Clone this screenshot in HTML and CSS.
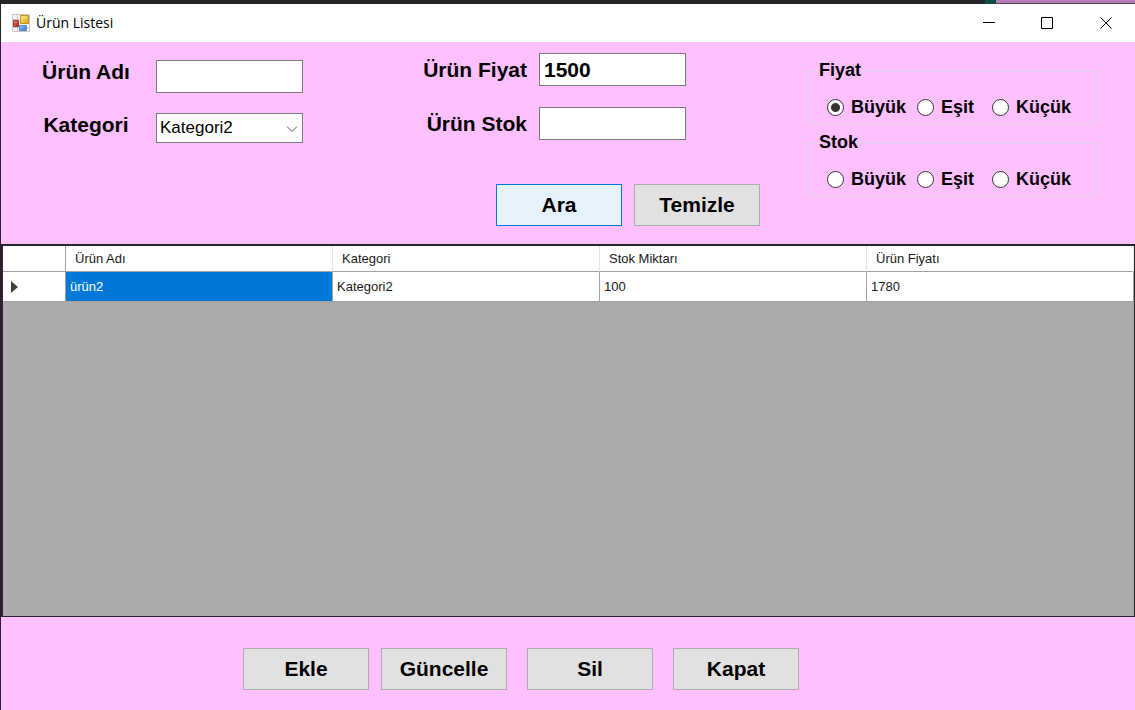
FILE: index.html
```html
<!DOCTYPE html>
<html lang="tr">
<head>
<meta charset="utf-8">
<meta name="viewport" content="width=device-width, initial-scale=1">
<title>Ürün Listesi</title>
<link rel="stylesheet" href="styles.css">
</head>
<body>
<div class="backdrop"><span class="backdrop-teal"></span><span class="backdrop-mauve"></span></div>
<div class="window">
  <header class="titlebar">
    <svg class="app-icon" width="18" height="18" viewBox="0 0 18 18" aria-hidden="true">
      <defs>
        <linearGradient id="gold" x1="0" y1="0" x2="1" y2="1"><stop offset="0" stop-color="#fff09a"/><stop offset="1" stop-color="#dda008"/></linearGradient>
        <linearGradient id="red" x1="0" y1="0" x2="1" y2="1"><stop offset="0" stop-color="#f08a70"/><stop offset="1" stop-color="#a81c10"/></linearGradient>
        <linearGradient id="blue" x1="0" y1="0" x2="1" y2="1"><stop offset="0" stop-color="#9cc8fa"/><stop offset="1" stop-color="#3070d0"/></linearGradient>
      </defs>
      <path fill="#f6f6f8" stroke="#c8c8cc" d="M.5.5h17v17H.5zM.5 5.5h7M5.5.5v17M.5 13.5h17"/>
      <path fill="url(#gold)" stroke="#c09020" d="M8.500 1.500h8v8h-8z"/>
      <path fill="url(#red)" stroke="#a83828" d="M1.500 6.500h5v6h-5z"/>
      <path fill="url(#blue)" stroke="#5888c8" d="M7.500 11.500h7v5h-7z"/>
    </svg>
    <h1 class="title">Ürün Listesi</h1>
    <button class="caption" type="button" aria-label="Simge durumuna küçült"><svg width="14" height="14" viewBox="0 0 14 14"><path d="M2 6.500h12"/></svg></button>
    <button class="caption" type="button" aria-label="Ekranı kapla"><svg width="14" height="14" viewBox="0 0 14 14"><path d="M1.500 1.500h11v11h-11z"/></svg></button>
    <button class="caption" type="button" aria-label="Pencereyi kapat"><svg width="14" height="14" viewBox="0 0 14 14"><path d="M1.500 1.500l11 11M12.500 1.500l-11 11"/></svg></button>
  </header>

  <form class="search">
    <div class="fields fields-main">
      <div class="field"><label for="name">Ürün Adı</label><input class="box" id="name" type="text"></div>
      <div class="field"><label for="category">Kategori</label>
        <span class="combo"><select id="category"><option>Kategori1</option><option selected>Kategori2</option></select>
        <svg class="chevron" width="12" height="8" viewBox="0 0 12 8" aria-hidden="true"><path d="M1 1.500l5 5 5-5"/></svg></span>
      </div>
    </div>
    <div class="middle">
      <div class="fields fields-value">
        <div class="field"><label for="price">Ürün Fiyat</label><input class="box" id="price" type="text" value="1500"></div>
        <div class="field"><label for="stock">Ürün Stok</label><input class="box" id="stock" type="text"></div>
      </div>
      <div class="search-actions">
        <button class="btn btn-default" type="button">Ara</button>
        <button class="btn" type="button">Temizle</button>
      </div>
    </div>
    <div class="compare">
      <fieldset>
        <legend>Fiyat</legend>
        <div class="radios">
          <label><input type="radio" name="price-op" checked>Büyük</label>
          <label><input type="radio" name="price-op">Eşit</label>
          <label><input type="radio" name="price-op">Küçük</label>
        </div>
      </fieldset>
      <fieldset>
        <legend>Stok</legend>
        <div class="radios">
          <label><input type="radio" name="stock-op">Büyük</label>
          <label><input type="radio" name="stock-op">Eşit</label>
          <label><input type="radio" name="stock-op">Küçük</label>
        </div>
      </fieldset>
    </div>
  </form>

  <main class="grid">
    <table>
      <colgroup><col class="col-marker"><col><col><col><col></colgroup>
      <thead>
        <tr><th></th><th scope="col">Ürün Adı</th><th scope="col">Kategori</th><th scope="col">Stok Miktarı</th><th scope="col">Ürün Fiyatı</th></tr>
      </thead>
      <tbody>
        <tr>
          <td class="marker"><svg width="8" height="12" viewBox="0 0 8 12" aria-hidden="true"><path d="M0 0l7 6-7 6z"/></svg></td>
          <td class="selected">ürün2</td><td>Kategori2</td><td>100</td><td>1780</td>
        </tr>
      </tbody>
    </table>
  </main>

  <footer class="actions">
    <div class="action-pair">
      <button class="btn" type="button">Ekle</button>
      <button class="btn" type="button">Güncelle</button>
    </div>
    <button class="btn" type="button">Sil</button>
    <button class="btn" type="button">Kapat</button>
  </footer>
</div>
</body>
</html>
```
FILE: styles.css
```css
* { box-sizing: border-box; }

body {
  margin: 0;
  min-height: 100vh;
  display: flex;
  flex-direction: column;
  background: #2a202b;
  color: #000;
  font-family: "Liberation Sans", Arial, sans-serif;
}

button, input, select { font: inherit; color: inherit; }

.backdrop {
  display: flex;
  justify-content: flex-end;
  height: 4px;
  background: #262626;
}
.backdrop-teal { width: 11px; background: #0b4f43; }
.backdrop-mauve { width: 139px; background: #b57bb4; border-bottom: 1px solid #57405a; }

.window {
  flex: 1;
  display: flex;
  flex-direction: column;
  margin-left: 1px;
  background: #ffc0ff;
}

.titlebar {
  display: flex;
  align-items: center;
  height: 38px;
  padding-left: 11px;
  background: #fff;
}
.title {
  flex: 1;
  margin: 0 0 0 6px;
  font: 400 14px/20px "Open Sans", "Noto Sans", sans-serif;
}
.caption {
  display: grid;
  place-items: center;
  width: 59px;
  height: 38px;
  padding: 0;
  border: 0;
  background: none;
}
.caption svg { fill: none; stroke: #000; }

.search {
  display: flex;
  align-items: flex-start;
  padding: 11px 38px 18px 41px;
  font-size: 21px;
  font-weight: 700;
  line-height: 24px;
}
.fields { display: grid; }
.field { display: flex; }
.fields-main { gap: 20px; padding-top: 7px; }
.fields-main .field { gap: 26px; align-items: flex-start; }
.fields-main label { width: 88px; text-align: center; white-space: nowrap; }
.fields-value { gap: 21px; }
.fields-value .field { gap: 12px; align-items: center; }
.fields-value label { width: 104px; text-align: right; white-space: nowrap; }

.box {
  width: 147px;
  height: 33px;
  padding: 0 4px;
  border: 1px solid #7a7a7a;
  background: #fff;
}
.combo { position: relative; display: flex; }
.combo select {
  appearance: none;
  width: 147px;
  height: 30px;
  padding: 0 20px 0 3px;
  border: 1px solid #7a7a7a;
  border-radius: 0;
  background: #fff;
  font-size: 17px;
  font-weight: 400;
}
.chevron {
  position: absolute;
  right: 5px;
  top: 12px;
  fill: none;
  stroke: #555;
  pointer-events: none;
}

.middle { margin-left: 120px; }
.search-actions {
  display: flex;
  justify-content: flex-end;
  gap: 12px;
  width: 337px;
  padding-top: 44px;
}
.btn {
  width: 126px;
  height: 42px;
  padding: 0;
  border: 1px solid #adadad;
  background: #e1e1e1;
  font-size: 21px;
  font-weight: 700;
}
.btn-default { border-color: #0078d7; background: #e5f1fb; }

.compare {
  display: grid;
  gap: 8px;
  width: 290px;
  margin-left: auto;
  padding-top: 7px;
  font-size: 18px;
  line-height: 20px;
}
fieldset {
  min-width: 0;
  margin: 0;
  padding: 16px 0 5px 19px;
  border: 1px solid #dcd8de;
}
legend { margin-left: -8px; padding: 0; }
.radios {
  display: grid;
  grid-template-columns: 90px 75px auto;
  height: 22px;
}
.radios label { display: flex; align-items: center; gap: 7px; }
.radios input {
  appearance: none;
  width: 17px;
  height: 17px;
  margin: 0;
  border: 1px solid #333;
  border-radius: 50%;
  background: #fff;
}
.radios input:checked { background: radial-gradient(circle, #333 4px, #fff 5px); }

.grid {
  flex: 1;
  border: solid #2b242c;
  border-width: 2px 1px 1px 2px;
  background: #ababab;
}
table {
  width: 100%;
  table-layout: fixed;
  border-collapse: separate;
  border-spacing: 0;
  color: #1a1a1a;
  font-size: 13px;
  line-height: 16px;
}
.col-marker { width: 63px; }
th, td {
  padding: 0 4px;
  border-right: 1px solid #a0a0a0;
  border-bottom: 1px solid #a0a0a0;
  background: #fff;
  text-align: left;
}
th {
  height: 26px;
  padding-left: 9px;
  border-right-color: #e5e5e5;
  font-weight: 400;
}
th:first-child { border-right-color: #a0a0a0; }
td { height: 30px; }
.marker { padding-left: 8px; }
.marker svg { display: block; fill: #404040; }
td.selected { background: #0078d7; color: #fff; }

.actions {
  display: flex;
  gap: 20px;
  padding: 31px 0 20px 242px;
}
.action-pair { display: flex; gap: 12px; }
```
